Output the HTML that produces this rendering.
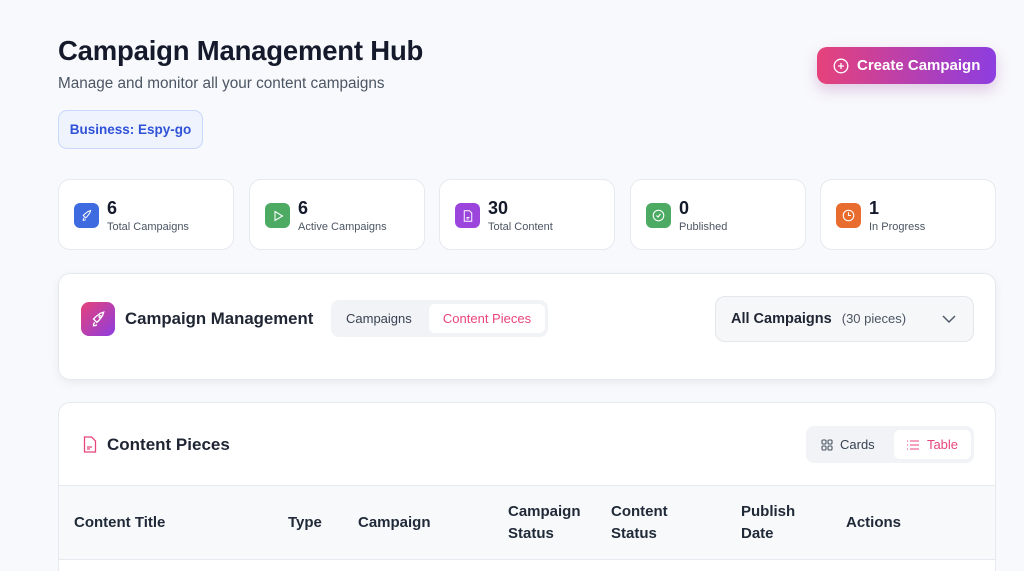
<!DOCTYPE html>
<html><head><meta charset="utf-8"><style>
*{box-sizing:border-box;margin:0;padding:0}
html,body{width:1024px;height:571px;overflow:hidden}
body{background:#f8f9fc;font-family:"Liberation Sans",sans-serif;color:#111827;position:relative}
.abs{position:absolute}
.card{position:absolute;background:#fff;border:1px solid #e6e9ef;border-radius:12px}
.stat .ic{position:absolute;left:15px;top:23px;width:25px;height:25px;border-radius:6px;display:flex;align-items:center;justify-content:center}
.stat .n{position:absolute;left:48px;top:18px;font-size:18px;font-weight:bold;color:#141a2b}
.stat .l{position:absolute;left:48px;top:41px;font-size:11px;color:#4b5563}
th{font-size:15px;font-weight:bold;color:#1f2937;text-align:left;line-height:22px}
</style></head><body>
<div class="abs" style="left:58px;top:35px;font-size:27.5px;font-weight:bold;color:#141a2b;letter-spacing:-0.2px">Campaign Management Hub</div>
<div class="abs" style="left:58px;top:75px;font-size:15.3px;color:#4b5563">Manage and monitor all your content campaigns</div>
<div class="abs" style="left:58px;top:110px;width:145px;height:39px;border-radius:9px;background:#eef3fe;border:1px solid #c9d8fb;color:#2f52d6;font-size:13.5px;font-weight:bold;display:flex;align-items:center;justify-content:center">Business: Espy-go</div>
<div class="abs" style="left:817px;top:47px;width:179px;height:37px;border-radius:10px;background:linear-gradient(90deg,#e6427a,#8d3de0);box-shadow:0 6px 14px rgba(150,60,160,.25);color:#fff;font-size:15px;font-weight:bold;display:flex;align-items:center;padding-left:16px">
<svg width="16" height="16" viewBox="0 0 16 16" style="margin-right:8px"><circle cx="8" cy="8" r="6.8" fill="none" stroke="#fff" stroke-width="1.3"/><path d="M8 5v6M5 8h6" stroke="#fff" stroke-width="1.3"/></svg>Create Campaign</div>

<div class="card stat" style="left:58px;top:179px;width:176px;height:71px"><div class="ic" style="background:#3f6be0"><svg width="13" height="13" viewBox="0 0 16 16" fill="none" stroke="#fff" stroke-width="1.3"><path d="M5 11c-1 1-1 3-1 3s2 0 3-1M6 10l-2-2 2-2 4-3 3-1-1 3-3 4-2 2z"/></svg></div><div class="n">6</div><div class="l">Total Campaigns</div></div>
<div class="card stat" style="left:249px;top:179px;width:176px;height:71px"><div class="ic" style="background:#4caa63"><svg width="12" height="12" viewBox="0 0 16 16" fill="none" stroke="#fff" stroke-width="1.4"><path d="M4 2l10 6-10 6z"/></svg></div><div class="n">6</div><div class="l">Active Campaigns</div></div>
<div class="card stat" style="left:439px;top:179px;width:176px;height:71px"><div class="ic" style="background:#9b45dd"><svg width="12" height="12" viewBox="0 0 16 16" fill="none" stroke="#fff" stroke-width="1.3"><path d="M3 1h7l3 3v11H3z M6 10h4M6 12h3"/></svg></div><div class="n">30</div><div class="l">Total Content</div></div>
<div class="card stat" style="left:630px;top:179px;width:176px;height:71px"><div class="ic" style="background:#4caa63"><svg width="13" height="13" viewBox="0 0 16 16" fill="none" stroke="#fff" stroke-width="1.3"><circle cx="8" cy="8" r="6.5"/><path d="M5.5 8l2 2 3-4"/></svg></div><div class="n">0</div><div class="l">Published</div></div>
<div class="card stat" style="left:820px;top:179px;width:176px;height:71px"><div class="ic" style="background:#e86c2e"><svg width="13" height="13" viewBox="0 0 16 16" fill="none" stroke="#fff" stroke-width="1.3"><circle cx="8" cy="8" r="6.5"/><path d="M8 4v4h3"/></svg></div><div class="n">1</div><div class="l">In Progress</div></div>

<div class="card" style="left:58px;top:273px;width:938px;height:107px;box-shadow:0 3px 10px rgba(0,0,0,.06)">
<div class="abs" style="left:22px;top:28px;width:34px;height:34px;border-radius:8px;background:linear-gradient(135deg,#e6427a,#8d3de0);display:flex;align-items:center;justify-content:center"><svg width="18" height="18" viewBox="0 0 16 16" fill="none" stroke="#fff" stroke-width="1.2"><path d="M5 11c-1 1-1 3-1 3s2 0 3-1M6 10l-2-2 2-2 4-3 3-1-1 3-3 4-2 2z"/><circle cx="10" cy="6" r="1"/></svg></div>
<div class="abs" style="left:66px;top:35px;font-size:16.8px;font-weight:bold;color:#1f2533">Campaign Management</div>
<div class="abs" style="left:272px;top:26px;width:217px;height:37px;border-radius:8px;background:#f1f3f6">
<div class="abs" style="left:15px;top:11px;font-size:13px;color:#374151">Campaigns</div>
<div class="abs" style="left:98px;top:4px;width:116px;height:29px;border-radius:6px;background:#fff;color:#e8457c;font-size:13px;display:flex;align-items:center;justify-content:center">Content Pieces</div></div>
<div class="abs" style="left:656px;top:22px;width:259px;height:46px;border-radius:10px;background:#f6f7f9;border:1px solid #e3e6eb">
<div class="abs" style="left:15px;top:14px;font-size:14.5px;font-weight:bold;color:#1f2533">All Campaigns <span style="font-weight:normal;color:#4b5563;font-size:13px;margin-left:6px">(30 pieces)</span></div>
<svg class="abs" style="left:226px;top:17px" width="14" height="10" viewBox="0 0 14 10" fill="none" stroke="#4b5563" stroke-width="1.4"><path d="M1 2l6 6 6-6"/></svg></div>
</div>

<div class="card" style="left:58px;top:402px;width:938px;height:169px;overflow:hidden;border-bottom:none;border-radius:12px 12px 0 0">
<svg class="abs" style="left:24px;top:33px" width="14" height="17" viewBox="0 0 14 17" fill="none" stroke="#e8457c" stroke-width="1.3"><path d="M1.5 1h7l4 4v11h-11z M4 11h5M4 13h3"/></svg>
<div class="abs" style="left:48px;top:32px;font-size:17px;font-weight:bold;color:#1f2533">Content Pieces</div>
<div class="abs" style="left:747px;top:23px;width:168px;height:37px;border-radius:8px;background:#f1f3f6">
<div class="abs" style="left:15px;top:11px;font-size:13px;color:#374151;display:flex;align-items:center"><svg width="12" height="12" viewBox="0 0 12 12" fill="none" stroke="#4b5563" stroke-width="1.1" style="margin-right:7px"><rect x="1" y="1" width="4" height="4" rx="1"/><rect x="7" y="1" width="4" height="4" rx="1"/><rect x="1" y="7" width="4" height="4" rx="1"/><rect x="7" y="7" width="4" height="4" rx="1"/></svg>Cards</div>
<div class="abs" style="left:88px;top:4px;width:77px;height:29px;border-radius:6px;background:#fff;color:#e8457c;font-size:13px;display:flex;align-items:center;justify-content:center"><svg width="12" height="10" viewBox="0 0 12 10" fill="none" stroke="#e8457c" stroke-width="1.1" style="margin-right:8px"><path d="M0 1h1M0 5h1M0 9h1M3 1h9M3 5h9M3 9h9"/></svg>Table</div></div>
<div class="abs" style="left:0;top:82px;width:938px;height:75px;background:#f8f9fb;border-top:1px solid #e6e9ef;border-bottom:1px solid #e6e9ef">
<table style="position:absolute;left:0;top:0;height:73px;border-collapse:collapse"><tr>
<th style="padding-left:15px;width:229px">Content Title</th><th style="width:70px">Type</th><th style="width:150px">Campaign</th><th style="width:103px">Campaign<br>Status</th><th style="width:130px">Content<br>Status</th><th style="width:105px">Publish<br>Date</th><th>Actions</th></tr></table></div>
</div>
</body></html>
